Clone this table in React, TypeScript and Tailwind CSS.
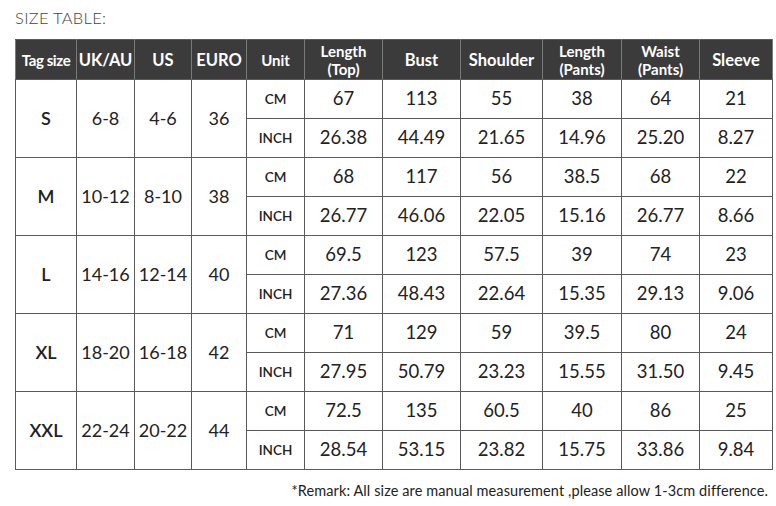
const headers = [
  ["Tag size"],
  ["UK/AU"],
  ["US"],
  ["EURO"],
  ["Unit"],
  ["Length", "(Top)"],
  ["Bust"],
  ["Shoulder"],
  ["Length", "(Pants)"],
  ["Waist", "(Pants)"],
  ["Sleeve"],
];

const widths = [61, 58, 57, 55, 58, 78, 78, 82, 79, 78, 73];

const sizes = [
  { tag: "S", uk: "6-8", us: "4-6", euro: "36", cm: ["67", "113", "55", "38", "64", "21"], inch: ["26.38", "44.49", "21.65", "14.96", "25.20", "8.27"] },
  { tag: "M", uk: "10-12", us: "8-10", euro: "38", cm: ["68", "117", "56", "38.5", "68", "22"], inch: ["26.77", "46.06", "22.05", "15.16", "26.77", "8.66"] },
  { tag: "L", uk: "14-16", us: "12-14", euro: "40", cm: ["69.5", "123", "57.5", "39", "74", "23"], inch: ["27.36", "48.43", "22.64", "15.35", "29.13", "9.06"] },
  { tag: "XL", uk: "18-20", us: "16-18", euro: "42", cm: ["71", "129", "59", "39.5", "80", "24"], inch: ["27.95", "50.79", "23.23", "15.55", "31.50", "9.45"] },
  { tag: "XXL", uk: "22-24", us: "20-22", euro: "44", cm: ["72.5", "135", "60.5", "40", "86", "25"], inch: ["28.54", "53.15", "23.82", "15.75", "33.86", "9.84"] },
];

const cell = "border border-[#5a5a5a] text-center align-middle p-0";

function headerSize(i: number, lines: number) {
  if (i === 0) return "text-[15px] tracking-[-0.4px] leading-[18px]";
  if (i === 4) return "text-[15px] leading-[18px]";
  if (lines > 1) return "text-[15px] leading-[18px]";
  return "text-[16.5px] leading-[20px]";
}

export default function App() {
  return (
    <div className="w-[776px] h-[506px] bg-white text-[#222] font-['Lato','Open_Sans',sans-serif] relative">
      <p className="pl-[15px] pt-[8px] text-[16.5px] font-light tracking-[0.3px] text-[#444] h-[39px] leading-[20px]">
        SIZE TABLE:
      </p>
      <table className="ml-[15px] border-collapse table-fixed w-[758px]">
        <colgroup>
          {widths.map((w, i) => (
            <col key={i} style={{ width: w }} />
          ))}
        </colgroup>
        <thead>
          <tr className="h-[40px] bg-[#3b3b3b] text-white">
            {headers.map((h, i) => (
              <th
                key={i}
                className={`border border-[#5a5a5a] border-x-[#7a7a7a] font-bold text-center align-middle p-0 ${headerSize(i, h.length)}`}
              >
                {h.map((line, j) => (
                  <div key={j}>{line}</div>
                ))}
              </th>
            ))}
          </tr>
        </thead>
        <tbody>
          {sizes.map((s) => (
            <>
              <tr key={s.tag + "cm"} className="h-[39px]">
                <td rowSpan={2} className={`${cell} text-[18px] font-semibold`}>{s.tag}</td>
                <td rowSpan={2} className={`${cell} text-[18px]`}>{s.uk}</td>
                <td rowSpan={2} className={`${cell} text-[18px]`}>{s.us}</td>
                <td rowSpan={2} className={`${cell} text-[18px]`}>{s.euro}</td>
                <td className={`${cell} text-[13.5px] font-semibold`}>CM</td>
                {s.cm.map((v, i) => (
                  <td key={i} className={`${cell} text-[18.5px]`}>{v}</td>
                ))}
              </tr>
              <tr key={s.tag + "inch"} className="h-[39px]">
                <td className={`${cell} text-[13.5px] font-semibold`}>INCH</td>
                {s.inch.map((v, i) => (
                  <td key={i} className={`${cell} text-[18.5px]`}>{v}</td>
                ))}
              </tr>
            </>
          ))}
        </tbody>
      </table>
      <p className="absolute right-[8px] top-[480px] text-[14.5px] text-[#222] tracking-[0.1px]">
        *Remark: All size are manual measurement ,please allow 1-3cm difference.
      </p>
    </div>
  );
}
